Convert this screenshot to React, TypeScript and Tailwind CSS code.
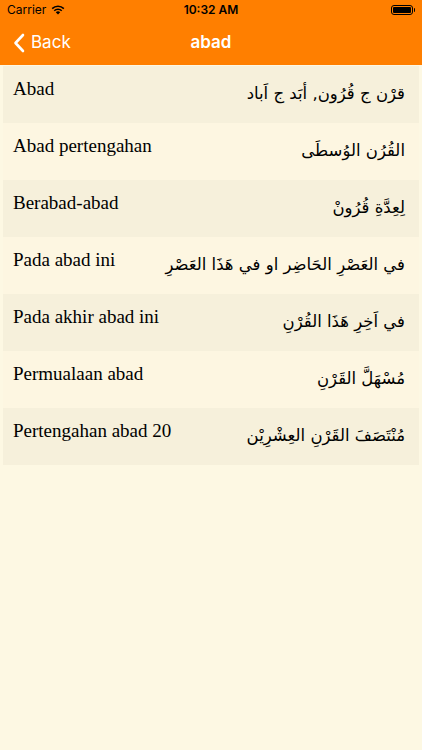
import React from "react";

const rows: [string, string][] = [
  ["Abad", "قرْن ج قُرُون, أبَد ج اَباد"],
  ["Abad pertengahan", "القُرُن الوُسطَى"],
  ["Berabad-abad", "لِعِدَّةِ قُرُونْ"],
  ["Pada abad ini", "في العَصْرِ الحَاضِر او في هَذَا العَصْرِ"],
  ["Pada akhir abad ini", "في اَخِرِ هَذَا القُرْنِ"],
  ["Permualaan abad", "مُسْهَلَّ القَرْنِ"],
  ["Pertengahan abad 20", "مُنْتَصَفَ القَرْنِ العِشْرِيْن"],
];

export default function App() {
  return (
    <div className="w-[422px] h-[750px] bg-[#fdf8e3] flex flex-col overflow-hidden">
      <div className="bg-[#ff7f00] h-[65px] flex flex-col">
        <div className="h-[20px] flex items-center justify-between px-[7px] text-white relative" style={{ fontFamily: "Inter, 'Liberation Sans', sans-serif" }}>
          <div className="flex items-center gap-[5px] text-[12px] text-black">
            <span>Carrier</span>
            <svg width="14" height="10" viewBox="0 0 14 10">
              <path d="M7 9.5 L4.8 7.2 A3.2 3.2 0 0 1 9.2 7.2 Z" fill="black" />
              <path d="M2.7 5.2 A6 6 0 0 1 11.3 5.2 L10.2 6.3 A4.5 4.5 0 0 0 3.8 6.3 Z" fill="black" />
              <path d="M0.6 3.1 A9 9 0 0 1 13.4 3.1 L12.3 4.2 A7.5 7.5 0 0 0 1.7 4.2 Z" fill="black" />
            </svg>
          </div>
          <div className="absolute left-0 right-0 text-center text-[12px] font-semibold text-black pointer-events-none">10:32 AM</div>
          <div className="flex items-center">
            <div className="w-[22px] h-[10px] border border-black rounded-[3px] p-[1px]">
              <div className="w-full h-full bg-black rounded-[1px]" />
            </div>
            <div className="w-[1.5px] h-[4px] bg-black ml-[1px] rounded-r" />
          </div>
        </div>
        <div className="flex-1 flex items-center relative" style={{ fontFamily: "Inter, 'Liberation Sans', sans-serif" }}>
          <div className="flex items-center pl-[13px] gap-[6px] text-white text-[17px]">
            <svg width="12" height="20" viewBox="0 0 12 20">
              <path d="M10 2 L2.5 10 L10 18" stroke="white" strokeWidth="2.6" fill="none" strokeLinecap="round" strokeLinejoin="round" />
            </svg>
            <span>Back</span>
          </div>
          <div className="absolute left-0 right-0 text-center text-white text-[17px] font-semibold pointer-events-none">abad</div>
        </div>
      </div>
      <div className="flex flex-col px-[3px] pt-[1px]">
        {rows.map(([l, r], i) => (
          <div
            key={i}
            className={`h-[57px] flex justify-between pl-[10px] pr-[14px] ${i % 2 === 0 ? "bg-[#f6f0db]" : "bg-[#fdf6e1]"}`}
          >
            <div className="pt-[11px] text-[19px] font-normal text-black leading-[24px]" style={{ fontFamily: "'Liberation Serif', serif" }}>{l}</div>
            <div dir="rtl" className="pt-[15px] text-[16.5px] text-black leading-[26px]" style={{ fontFamily: "'DejaVu Sans', 'Noto Sans', sans-serif" }}>{r}</div>
          </div>
        ))}
      </div>
    </div>
  );
}
